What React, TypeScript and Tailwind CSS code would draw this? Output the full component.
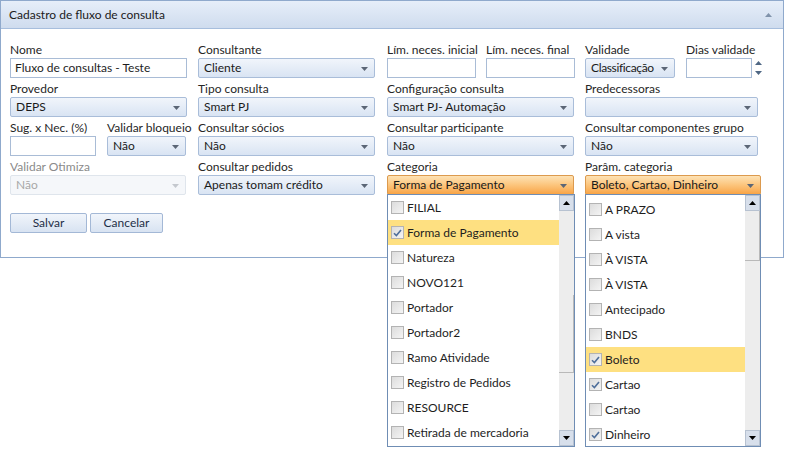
import React from 'react';

// ─── Small controls ──────────────────────────────────────────────────────────

function Arrow({ className = '' }: { className?: string }) {
  return (
    <svg width="7" height="4" viewBox="0 0 7 4" className={className}>
      <path d="M0 0 H7 L3.5 4 Z" fill="currentColor" />
    </svg>
  );
}

function Label({ children, muted }: { children: React.ReactNode; muted?: boolean }) {
  return (
    <div className={`h-[16px] leading-[16px] whitespace-nowrap ${muted ? 'text-[#8a8a8a]' : 'text-[#262626]'}`}>
      {children}
    </div>
  );
}

function TextInput({ value = '', w }: { value?: string; w: string }) {
  return (
    <div className={`${w} h-[20px] border border-[#a9bcd6] bg-white px-[4px] leading-[18px] whitespace-nowrap`}>
      {value}
    </div>
  );
}

function Combo({
  value = '',
  w,
  tone = 'blue',
  textClass = '',
}: {
  value?: string;
  w: string;
  tone?: 'blue' | 'orange' | 'disabled';
  textClass?: string;
}) {
  const skin =
    tone === 'orange'
      ? 'border-[#dc9a4e] bg-linear-to-b from-[#fde2b4] via-[#fcc57c] to-[#f8a445] text-[#1a1a1a]'
      : tone === 'disabled'
      ? 'border-[#dfe5ec] bg-[#f5f7fa] text-[#a8a8a8]'
      : 'border-[#a9bdd9] bg-linear-to-b from-[#f1f5fb] to-[#d9e4f3] text-[#1a1a1a]';
  return (
    <div className={`${w} ${skin} relative flex h-[20px] items-center rounded-[2px] border pl-[5px] whitespace-nowrap`}>
      <span className={textClass}>{value}</span>
      <Arrow className={`absolute right-[6px] top-[8px] ${tone === 'disabled' ? 'text-[#c4c8ce]' : 'text-[#5b6676]'}`} />
    </div>
  );
}

function Button({ children, w }: { children: React.ReactNode; w: string }) {
  return (
    <div className={`${w} flex h-[20px] items-center justify-center rounded-[2px] border border-[#a3b8d6] bg-linear-to-b from-[#f1f5fb] to-[#d8e3f2] text-[#1f2f47]`}>
      {children}
    </div>
  );
}

function Check({ on }: { on?: boolean }) {
  return (
    <div className="flex h-[13px] w-[13px] shrink-0 items-center justify-center border border-[#b3b3b3] bg-linear-to-br from-[#dcdcdc] to-[#f4f4f4]">
      {on && (
        <svg width="9" height="8" viewBox="0 0 9 8">
          <path d="M1 4.2 L3.4 6.6 L8 1" fill="none" stroke="#4f6f9b" strokeWidth="1.6" />
        </svg>
      )}
    </div>
  );
}

// ─── Dropdown check list ─────────────────────────────────────────────────────

type Item = { label: string; on?: boolean; hot?: boolean };

function CheckList({
  items,
  className,
  thumbTop,
  thumbH,
  padTop,
}: {
  items: Item[];
  className: string;
  thumbTop: string;
  thumbH: string;
  padTop: string;
}) {
  return (
    <div className={`absolute flex border border-[#6f8db4] bg-white ${className}`}>
      <div className={`flex-1 overflow-hidden ${padTop}`}>
        {items.map((it, i) => (
          <div
            key={i}
            className={`flex h-[25px] items-center gap-[3px] pl-[3px] whitespace-nowrap ${it.hot ? 'bg-[#fee081]' : ''}`}
          >
            <Check on={it.on} />
            <span className="text-[#1e1e1e]">{it.label}</span>
          </div>
        ))}
      </div>
      <div className="relative flex w-[15px] flex-col bg-[#ededed]">
        <div className="flex h-[16px] items-center justify-center border border-[#b7c2d1] bg-[#d7dfeb]">
          <Arrow className="rotate-180 text-black" />
        </div>
        <div className={`absolute left-0 w-[15px] border-r border-b border-[#b9b9b9] bg-[#ededed] ${thumbTop} ${thumbH}`} />
        <div className="flex-1" />
        <div className="flex h-[16px] items-center justify-center border border-[#b7c2d1] bg-[#d7dfeb]">
          <Arrow className="text-black" />
        </div>
      </div>
    </div>
  );
}

const categorias: Item[] = [
  { label: 'FILIAL' },
  { label: 'Forma de Pagamento', on: true, hot: true },
  { label: 'Natureza' },
  { label: 'NOVO121' },
  { label: 'Portador' },
  { label: 'Portador2' },
  { label: 'Ramo Atividade' },
  { label: 'Registro de Pedidos' },
  { label: 'RESOURCE' },
  { label: 'Retirada de mercadoria' },
];

const parametros: Item[] = [
  { label: 'A PRAZO' },
  { label: 'A vista' },
  { label: 'À VISTA' },
  { label: 'À VISTA' },
  { label: 'Antecipado' },
  { label: 'BNDS' },
  { label: 'Boleto', on: true, hot: true },
  { label: 'Cartao', on: true },
  { label: 'Cartao' },
  { label: 'Dinheiro', on: true },
];

// ─── Page ────────────────────────────────────────────────────────────────────

export default function App() {
  return (
    <div className="relative h-[452px] w-[786px] overflow-hidden bg-white font-[Lato,'Open_Sans',sans-serif] text-[12px] text-[#1e1e1e]">
      {/* Panel */}
      <div className="w-[784px] border border-[#8fa9cc] bg-white">
        {/* Header */}
        <div className="flex h-[28px] items-center justify-between border-b border-[#a7bedd] bg-linear-to-b from-[#e6eef9] to-[#cfdcee] pl-[8px] pr-[11px]">
          <span className="text-[#1b1b1b]">Cadastro de fluxo de consulta</span>
          <Arrow className="rotate-180 text-[#8093ab]" />
        </div>

        {/* Form */}
        <div className="flex flex-col gap-[3px] pb-[24px] pl-[9px] pt-[13px]">
          {/* Row 1 */}
          <div className="flex">
            <div className="w-[188px]"><Label>Nome</Label><TextInput w="w-[177px]" value="Fluxo de consultas - Teste" /></div>
            <div className="w-[189px]"><Label>Consultante</Label><Combo w="w-[177px]" value="Cliente" /></div>
            <div className="w-[99px]"><Label>Lím. neces. inicial</Label><TextInput w="w-[89px]" /></div>
            <div className="w-[99px]"><Label>Lím. neces. final</Label><TextInput w="w-[89px]" /></div>
            <div className="w-[101px]">
              <Label>Validade</Label>
              <Combo w="w-[90px]" value="Classificação" textClass="tracking-[-0.35px]" />
            </div>
            <div>
              <Label>Dias validade</Label>
              <div className="flex items-center gap-[3px]">
                <TextInput w="w-[66px]" />
                <div className="flex flex-col gap-[6px] text-[#4f6784]">
                  <Arrow className="rotate-180" />
                  <Arrow />
                </div>
              </div>
            </div>
          </div>

          {/* Row 2 */}
          <div className="flex">
            <div className="w-[188px]"><Label>Provedor</Label><Combo w="w-[177px]" value="DEPS" /></div>
            <div className="w-[189px]"><Label>Tipo consulta</Label><Combo w="w-[177px]" value="Smart PJ" /></div>
            <div className="w-[198px]"><Label>Configuração consulta</Label><Combo w="w-[187px]" value="Smart PJ- Automação" /></div>
            <div><Label>Predecessoras</Label><Combo w="w-[173px]" /></div>
          </div>

          {/* Row 3 */}
          <div className="flex">
            <div className="w-[97px]"><Label>Sug. x Nec. (%)</Label><TextInput w="w-[86px]" /></div>
            <div className="w-[91px]"><Label>Validar bloqueio</Label><Combo w="w-[79px]" value="Não" /></div>
            <div className="w-[189px]"><Label>Consultar sócios</Label><Combo w="w-[177px]" value="Não" /></div>
            <div className="w-[198px]"><Label>Consultar participante</Label><Combo w="w-[187px]" value="Não" /></div>
            <div><Label>Consultar componentes grupo</Label><Combo w="w-[173px]" value="Não" /></div>
          </div>

          {/* Row 4 */}
          <div className="flex">
            <div className="w-[188px]"><Label muted>Validar Otimiza</Label><Combo w="w-[176px]" value="Não" tone="disabled" /></div>
            <div className="w-[189px]"><Label>Consultar pedidos</Label><Combo w="w-[177px]" value="Apenas tomam crédito" /></div>
            <div className="w-[198px]"><Label>Categoria</Label><Combo w="w-[187px]" value="Forma de Pagamento" tone="orange" /></div>
            <div><Label>Parâm. categoria</Label><Combo w="w-[176px]" value="Boleto, Cartao, Dinheiro" tone="orange" /></div>
          </div>

          {/* Actions */}
          <div className="mt-[15px] flex gap-[3px]">
            <Button w="w-[77px]">Salvar</Button>
            <Button w="w-[73px]">Cancelar</Button>
          </div>
        </div>
      </div>

      {/* Open dropdowns */}
      <CheckList
        items={categorias}
        className="left-[387px] top-[194px] h-[253px] w-[188px]"
        thumbTop="top-[100px]"
        thumbH="h-[78px]"
        padTop="pt-0"
      />
      <CheckList
        items={parametros}
        className="left-[585px] top-[194px] h-[253px] w-[176px]"
        thumbTop="top-[16px]"
        thumbH="h-[50px]"
        padTop="pt-[2px]"
      />
    </div>
  );
}
